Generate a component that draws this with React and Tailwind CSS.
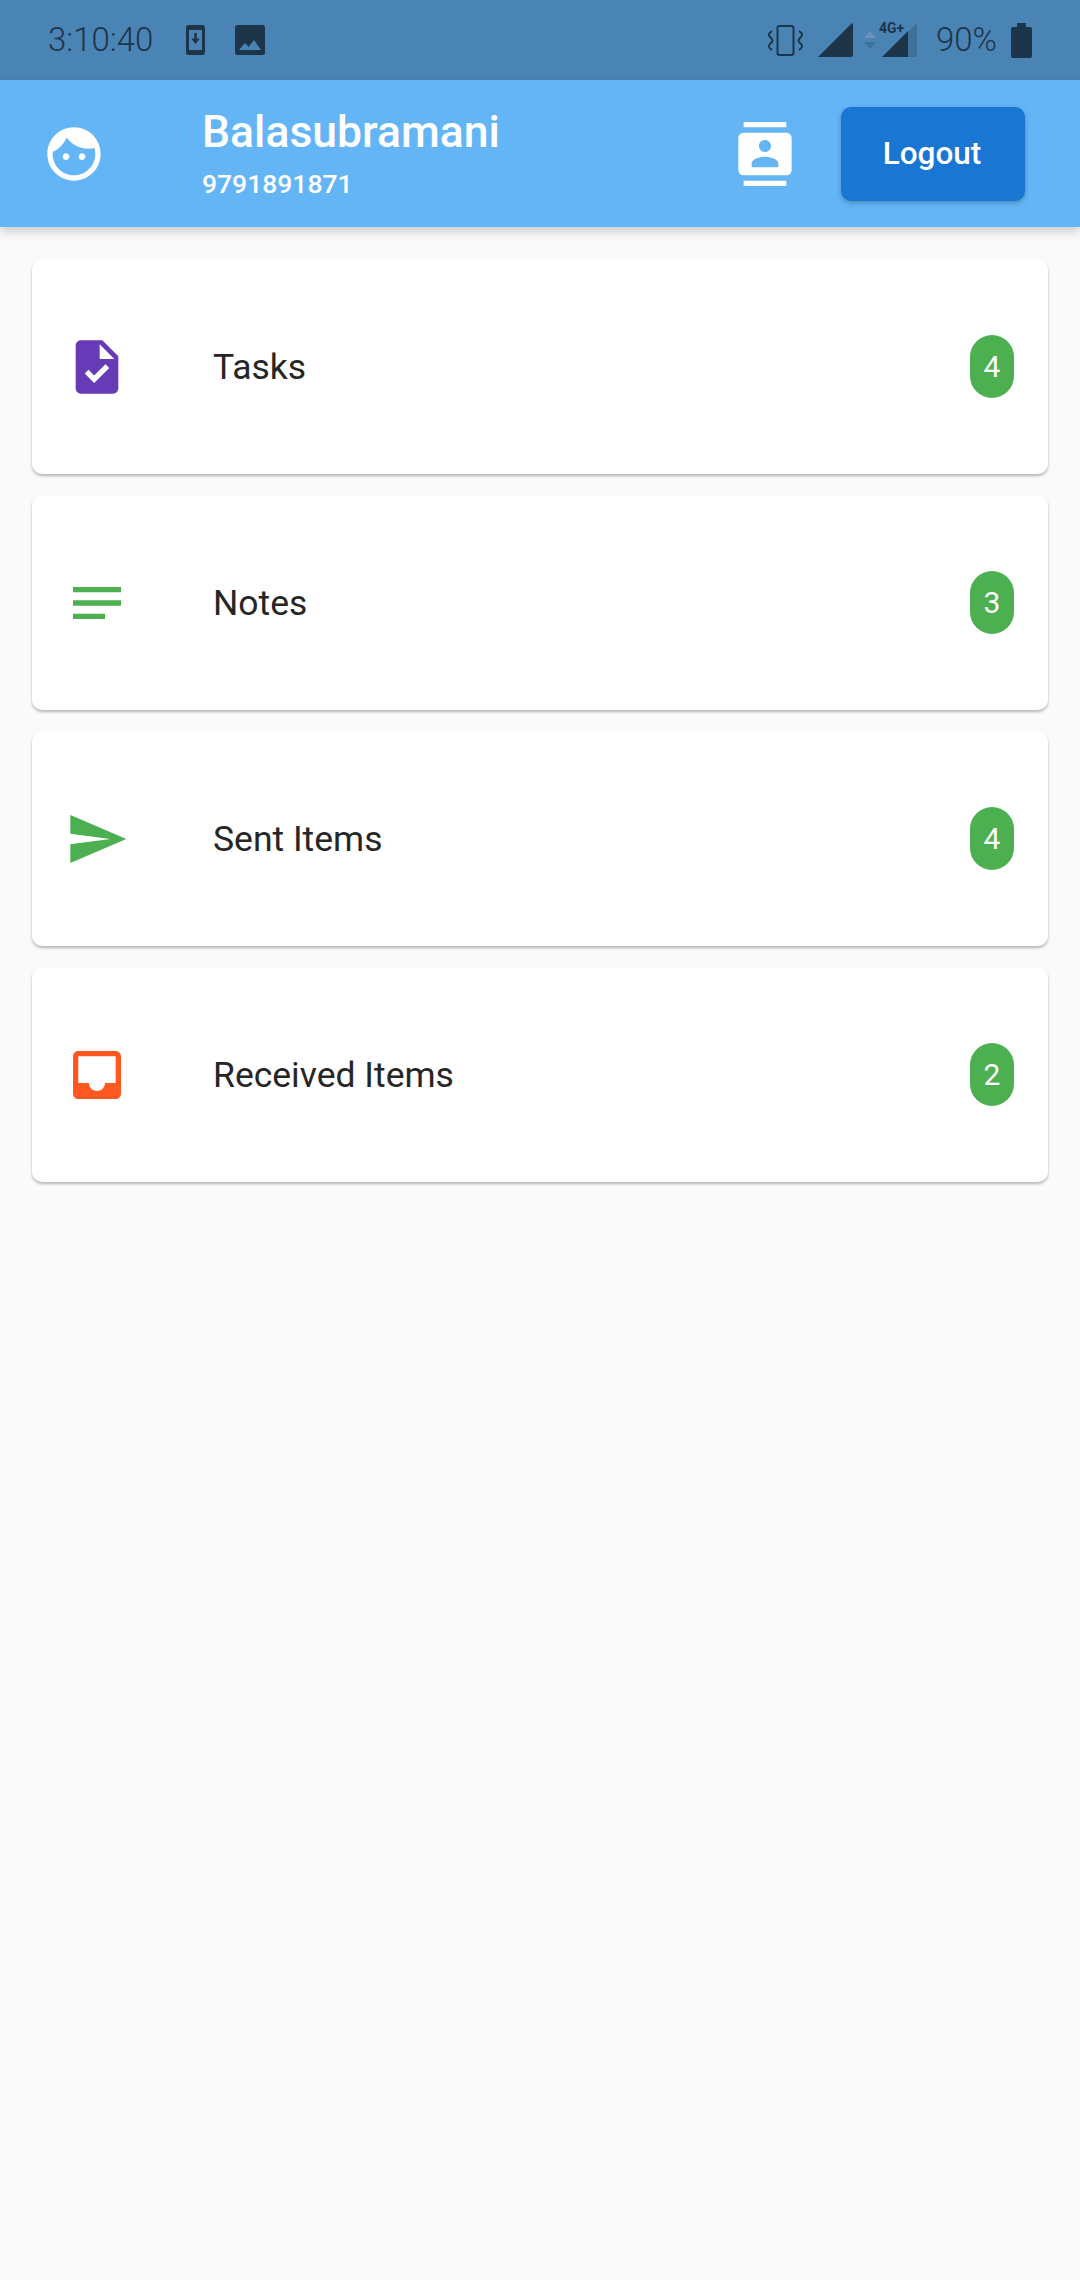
import React from "react";

const paths = {
  face: "M9 11.75c-.69 0-1.25.56-1.25 1.25s.56 1.25 1.25 1.25 1.25-.56 1.25-1.25-.56-1.25-1.25-1.25zm6 0c-.69 0-1.25.56-1.25 1.25s.56 1.25 1.25 1.25 1.25-.56 1.25-1.25-.56-1.25-1.25-1.25zM12 2C6.48 2 2 6.48 2 12s4.48 10 10 10 10-4.48 10-10S17.52 2 12 2zm0 18c-4.41 0-8-3.59-8-8 0-.29.02-.58.05-.86 2.36-1.05 4.23-2.98 5.21-5.37C11.07 8.33 14.05 10 17.42 10c.78 0 1.53-.09 2.25-.26.21.71.33 1.47.33 2.26 0 4.41-3.59 8-8 8z",
  contacts: "M20 0H4v2h16V0zM4 24h16v-2H4v2zM20 4H4c-1.1 0-2 .9-2 2v12c0 1.1.9 2 2 2h16c1.1 0 2-.9 2-2V6c0-1.1-.9-2-2-2zm-8 2.75c1.24 0 2.25 1.01 2.25 2.25s-1.01 2.25-2.25 2.25S9.75 10.24 9.75 9 10.76 6.75 12 6.75zM17 17H7v-1.5c0-1.67 3.33-2.5 5-2.5s5 .83 5 2.5V17z",
  task: "M14 2H6c-1.1 0-1.99.9-1.99 2L4 20c0 1.1.89 2 1.99 2H18c1.1 0 2-.9 2-2V8l-6-6zm-3.06 16L7.4 14.46l1.41-1.41 2.12 2.12 4.24-4.24 1.41 1.41L10.94 18zM13 9V3.5L18.5 9H13z",
  notes: "M3 18h12v-2H3v2zM3 6v2h18V6H3zm0 7h18v-2H3v2z",
  send: "M2.01 21L23 12 2.01 3 2 10l15 2-15 2z",
  inbox: "M19 3H4.99c-1.11 0-1.98.89-1.98 2L3 19c0 1.1.88 2 1.99 2H19c1.1 0 2-.9 2-2V5c0-1.11-.9-2-2-2zm0 12h-4c0 1.66-1.35 3-3 3s-3-1.34-3-3H4.99V5H19v10z",
};

function MaterialIcon({ name, className }) {
  return (
    <svg viewBox="0 0 24 24" className={`h-16 w-16 shrink-0 fill-current ${className}`}>
      <path d={paths[name]} />
    </svg>
  );
}

function SignalIcon({ className = "" }) {
  return (
    <svg viewBox="0 0 35 34" className={`h-[34px] w-[35px] ${className}`}>
      <path d="M0 34 L33 1 Q35 -1 35 2 V32 Q35 34 33 34 Z" fill="#1d3549" />
    </svg>
  );
}

function StatusBar() {
  return (
    <div className="flex h-20 items-center bg-[#4a84b5] pl-12 pr-12 text-[#1d3549]">
      <span className="w-[138px] text-[33px] font-light">3:10:40</span>
      <svg viewBox="0 0 19 30" className="h-[30px] w-[19px]">
        <rect width="19" height="30" rx="2.5" fill="#1d3549" />
        <rect x="3" y="5" width="13" height="20" fill="#4a84b5" />
        <path d="M8.2 8h2.6v5.5h3L9.5 19l-4.3-5.500h3z" fill="#1d3549" />
      </svg>
      <svg viewBox="0 0 30 30" className="ml-[30px] h-[30px] w-[30px]">
        <path
          fillRule="evenodd"
          d="M2.500 0h25A2.500 2.500 0 0 1 30 2.500v25a2.500 2.500 0 0 1-2.500 2.500h-25A2.500 2.500 0 0 1 0 27.500v-25A2.500 2.500 0 0 1 2.500 0zM4 25h22l-7-10-5.500 7-3.500-4z"
          fill="#1d3549"
        />
      </svg>

      <div className="ml-auto flex items-center">
        <svg viewBox="0 0 35 31" className="h-[31px] w-[35px]" fill="none" stroke="#1d3549">
          <rect x="9.500" y="1" width="16" height="29" rx="2" strokeWidth="2" />
          <path d="M4 6 C0 9 0 10 3 13 C5 15 5 16 3 18 C0 21 0 22 4 25" strokeWidth="2" />
          <path d="M31 6 C35 9 35 10 32 13 C30 15 30 16 32 18 C35 21 35 22 31 25" strokeWidth="2" />
        </svg>
        <SignalIcon className="ml-[15px]" />
        <svg viewBox="0 0 12 18" className="ml-[11px] h-[18px] w-3">
          <path d="M6 0l6 7H0z" fill="#6b93b8" />
          <path d="M6 18l6-7H0z" fill="#3f7099" />
        </svg>
        <div className="relative ml-1.5 h-[34px] w-[35px]">
          <svg viewBox="0 0 35 34" className="h-[34px] w-[35px]">
            <path d="M24 11 L35 0 V32 Q35 34 33 34 H24 Z" fill="#3f7099" />
            <path d="M0 34 L26 8 V34 Z" fill="#1d3549" />
          </svg>
          <span className="absolute -top-[2px] -left-[3px] text-[14px] leading-none font-bold">
            4G+
          </span>
        </div>
        <span className="ml-[19px] text-[33px] font-light">90%</span>
        <svg viewBox="0 0 21 35" className="ml-[14px] h-[35px] w-[21px]">
          <path d="M6 0h9v4h4a2 2 0 0 1 2 2v27a2 2 0 0 1-2 2H2a2 2 0 0 1-2-2V6a2 2 0 0 1 2-2h4z" fill="#1d3549" />
        </svg>
      </div>
    </div>
  );
}

function Header() {
  return (
    <header className="relative flex h-[147px] items-center bg-[#64b5f6] pl-[42px] pr-[55px] text-white shadow-[0_4px_10px_rgba(0,0,0,0.2)]">
      <MaterialIcon name="face" className="text-white" />
      <div className="ml-[96px] flex flex-col pb-[4px]">
        <span className="text-[44.5px] leading-[56px] font-medium">Balasubramani</span>
        <span className="mt-[9px] text-[26.5px] leading-[30px] font-medium">9791891871</span>
      </div>
      <MaterialIcon name="contacts" className="ml-auto text-white" />
      <button className="ml-[44px] h-[94px] w-[184px] rounded-[10px] bg-[#1976d2] pr-[2px] text-[31.500px] font-medium text-white shadow-[0_2px_5px_rgba(0,0,0,0.25)]">
        Logout
      </button>
    </header>
  );
}

const rows = [
  { label: "Tasks", icon: "task", color: "text-[#673ab7]", count: 4 },
  { label: "Notes", icon: "notes", color: "text-[#4caf50]", count: 3 },
  { label: "Sent Items", icon: "send", color: "text-[#4caf50]", count: 4 },
  { label: "Received Items", icon: "inbox", color: "text-[#ff5722]", count: 2 },
];

function Row({ label, icon, color, count }) {
  return (
    <div className="flex h-[215px] items-center rounded-[10px] bg-white pl-[33px] pr-[34px] shadow-[0_2px_3px_rgba(0,0,0,0.28)]">
      <MaterialIcon name={icon} className={color} />
      <span className="ml-[84px] pt-[3px] text-[35.500px] text-[#262626]">{label}</span>
      <span className="ml-auto flex h-[63px] w-[44px] items-center justify-center rounded-full bg-[#4caf50] text-[30px] font-normal text-white">
        {count}
      </span>
    </div>
  );
}

export default function App() {
  return (
    <div className="min-h-screen bg-[#fafafa] font-['Roboto',sans-serif]">
      <StatusBar />
      <Header />
      <main className="flex flex-col gap-[21px] px-8 pt-8">
        {rows.map((row) => (
          <Row key={row.label} {...row} />
        ))}
      </main>
    </div>
  );
}
